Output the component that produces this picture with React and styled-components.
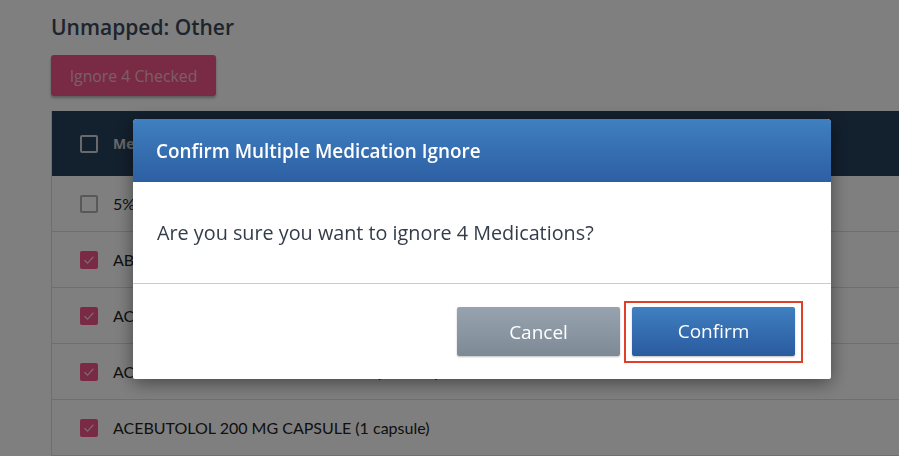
import React from 'react'
import styled, { createGlobalStyle } from 'styled-components'

const GlobalStyle = createGlobalStyle`
  html, body {
    margin: 0;
    padding: 0;
    background: #ffffff;
    font-family: "Open Sans", Lato, sans-serif;
    overflow: hidden;
  }
`

const rows = [
  { name: '5% DEXTROSE 1000 ML BAG', checked: false },
  { name: 'ABACAVIR 300 MG TABLET (1 tablet)', checked: true },
  { name: 'ACARBOSE 25 MG TABLET (1 tablet)', checked: true },
  { name: 'ACETAMINOPHEN 325 MG TABLET (1 tablet)', checked: true },
  { name: 'ACEBUTOLOL 200 MG CAPSULE (1 capsule)', checked: true },
]

const Check = () => (
  <svg width="12" height="10" viewBox="0 0 12 10">
    <path d="M1.5 5.2 L4.6 8.2 L10.5 1.6" fill="none" stroke="#f3dde4" strokeWidth="1.2" />
  </svg>
)

const App = () => {
  return (
    <>
      <GlobalStyle />
      <Page>
        <Title>Unmapped: Other</Title>
        <IgnoreButton>Ignore 4 Checked</IgnoreButton>
        <Table>
          <HeadRow>
            <Box $dark />
            <HeadLabel>Medication</HeadLabel>
          </HeadRow>
          {rows.map((r) => (
            <Row key={r.name}>
              <Box $checked={r.checked}>{r.checked && <Check />}</Box>
              <RowLabel>{r.name}</RowLabel>
            </Row>
          ))}
        </Table>
      </Page>

      <Overlay>
        <Modal>
          <ModalHeader>Confirm Multiple Medication Ignore</ModalHeader>
          <ModalBody>Are you sure you want to ignore 4 Medications?</ModalBody>
          <ModalFooter>
            <ActionButton $variant="cancel">Cancel</ActionButton>
            <Highlight>
              <ActionButton>Confirm</ActionButton>
            </Highlight>
          </ModalFooter>
        </Modal>
      </Overlay>
    </>
  )
}

export default App

const Page = styled.div`
  padding: 13px 0 0 51px;
  height: 456px;
  box-sizing: border-box;
  overflow: hidden;
`

const Title = styled.h1`
  margin: 0 0 14px 0;
  font-size: 21px;
  font-weight: 600;
  color: #3a4858;
  line-height: 28px;
`

const IgnoreButton = styled.button`
  display: block;
  width: 165px;
  height: 41px;
  border: none;
  border-radius: 3px;
  background: #f2548a;
  color: rgba(255, 255, 255, 0.62);
  font-family: inherit;
  font-size: 15.8px;
  box-shadow: 0 2px 3px rgba(0, 0, 0, 0.3);
  margin-bottom: 15px;
`

const Table = styled.div`
  border-left: 1px solid #dcdcdc;
  width: 900px;
`

const HeadRow = styled.div`
  display: flex;
  align-items: center;
  height: 65px;
  padding-left: 28px;
  background: #26405c;
`

const Row = styled.div`
  display: flex;
  align-items: center;
  height: 55px;
  padding-left: 28px;
  border-bottom: 1px solid #dedede;
  background: #ffffff;
`

const Box = styled.span`
  width: 18px;
  height: 18px;
  box-sizing: border-box;
  border-radius: 2px;
  display: flex;
  align-items: center;
  justify-content: center;
  border: ${(p) => (p.$checked ? 'none' : p.$dark ? '2px solid #cfd3d8' : '2px solid #b0b0b0')};
  background: ${(p) => (p.$checked ? '#f4548a' : 'transparent')};
  margin-right: 15px;
`

const HeadLabel = styled.span`
  color: #cfd2d6;
  font-weight: 700;
  font-size: 14px;
`

const RowLabel = styled.span`
  font-family: Lato, sans-serif;
  color: #222222;
  font-size: 16px;
`

const Overlay = styled.div`
  position: fixed;
  inset: 0;
  background: rgba(0, 0, 0, 0.5);
  padding: 119px 0 0 133px;
`

const Modal = styled.div`
  width: 698px;
  background: #ffffff;
  border-radius: 4px 4px 2px 2px;
  box-shadow: 0 4px 18px rgba(0, 0, 0, 0.45);
  overflow: hidden;
`

const ModalHeader = styled.div`
  height: 63px;
  display: flex;
  align-items: center;
  padding-left: 23px;
  background: linear-gradient(#3f7fc0, #2d5fa3);
  color: #ffffff;
  font-weight: 600;
  font-size: 18.9px;
`

const ModalBody = styled.div`
  height: 101px;
  display: flex;
  align-items: center;
  padding-left: 24px;
  color: #333d4a;
  font-size: 19.8px;
  border-bottom: 1px solid #cccccc;
`

const ModalFooter = styled.div`
  height: 95px;
  display: flex;
  align-items: center;
  justify-content: flex-end;
  gap: 4px;
  padding-right: 28px;
`

const Highlight = styled.div`
  border: 2px solid #e0402a;
  padding: 4px 6px 5px 6px;
  display: flex;
`

const ActionButton = styled.button`
  width: 163px;
  height: 49px;
  border: none;
  border-radius: 2px;
  color: #ffffff;
  font-family: inherit;
  font-size: 19px;
  background: ${(p) =>
    p.$variant === 'cancel'
      ? 'linear-gradient(#97a4af, #7d8a95)'
      : 'linear-gradient(#3f7fc0, #2a5b9f)'};
  box-shadow: 0 1px 2px rgba(0, 0, 0, 0.25);
`
